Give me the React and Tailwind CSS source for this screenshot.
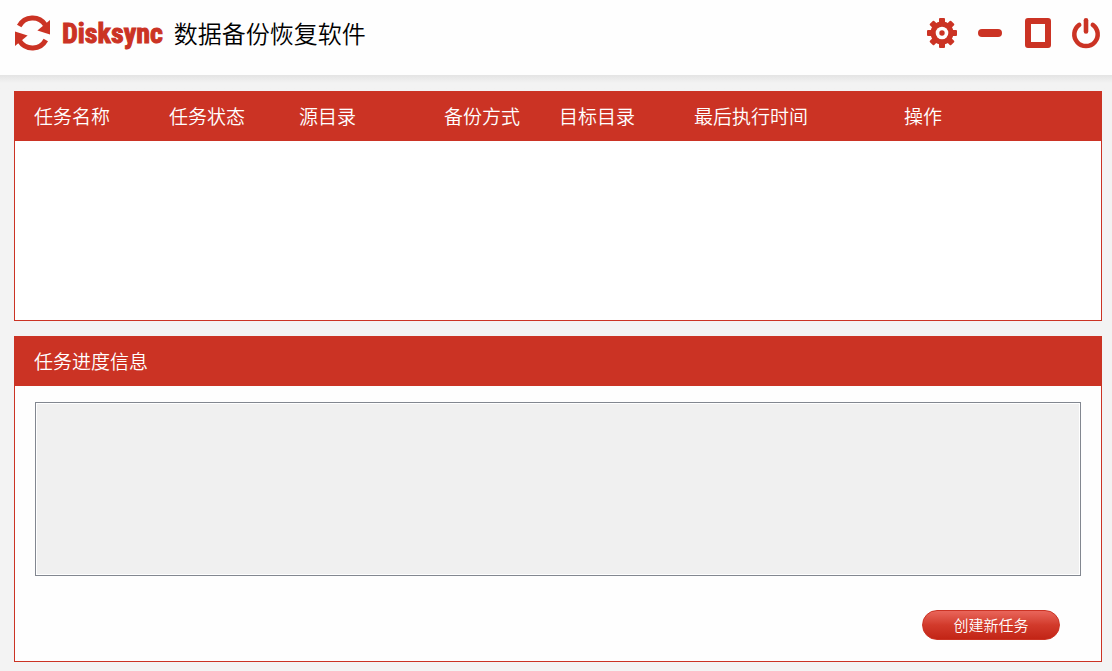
import React from 'react';

const columns = [
  { label: '任务名称', width: 'w-[154px]' },
  { label: '任务状态', width: 'w-[130px]' },
  { label: '源目录', width: 'w-[145px]' },
  { label: '备份方式', width: 'w-[115px]' },
  { label: '目标目录', width: 'w-[135px]' },
  { label: '最后执行时间', width: 'w-[210px]' },
  { label: '操作', width: '' },
];

const SyncIcon = () => (
  <svg className="h-9 w-9" viewBox="0 0 36 36" aria-hidden="true">
    <g fill="#cb3324">
      <path d="M4.2 11A15.2 15.2 0 0 1 30.3 9.8" fill="none" stroke="#cb3324" strokeWidth="5" />
      <path d="M35 5V19.6L22.4 15.4Z" />
    </g>
    <g fill="#cb3324" transform="rotate(180 17.5 18)">
      <path d="M4.2 11A15.2 15.2 0 0 1 30.3 9.8" fill="none" stroke="#cb3324" strokeWidth="5" />
      <path d="M35 5V19.6L22.4 15.4Z" />
    </g>
  </svg>
);

const GearIcon = () => (
  <svg className="h-8 w-8" viewBox="-16 -16 32 32" fill="#cb3324" aria-hidden="true">
    <g>
      {[0, 45, 90, 135].map((angle) => (
        <rect key={angle} x="-3" y="-15" width="6" height="30" rx="1" transform={`rotate(${angle})`} />
      ))}
    </g>
    <circle r="11.5" />
    <circle r="6.3" fill="#fefefe" />
    <circle r="2.7" />
  </svg>
);

const MinimizeIcon = () => (
  <svg className="h-8 w-8" viewBox="0 0 32 32" fill="#cb3324" aria-hidden="true">
    <rect x="4" y="12" width="24" height="8" rx="4" />
  </svg>
);

const MaximizeIcon = () => (
  <svg className="h-8 w-8" viewBox="0 0 32 32" fill="none" aria-hidden="true">
    <path fill="#cb3324" fillRule="evenodd" d="M6 1H26A3 3 0 0 1 29 4V28A3 3 0 0 1 26 31H6A3 3 0 0 1 3 28V4A3 3 0 0 1 6 1ZM9 7V25H23V7Z" />
  </svg>
);

const PowerIcon = () => (
  <svg className="h-8 w-8" viewBox="0 0 32 32" fill="none" stroke="#cb3324" strokeLinecap="round" aria-hidden="true">
    <path d="M9.2 7.8A11.7 11.7 0 1 0 22.8 7.8" strokeWidth="4.5" />
    <path d="M16 3.3V14.5" strokeWidth="4.6" />
  </svg>
);

const windowButtons = [
  { label: '设置', Icon: GearIcon },
  { label: '最小化', Icon: MinimizeIcon },
  { label: '最大化', Icon: MaximizeIcon },
  { label: '退出', Icon: PowerIcon },
];

function Header() {
  return (
    <header className="flex h-[75px] items-start justify-between bg-[#fefefe] pt-[15px] pr-[10px] pl-[15px]">
      <div className="flex h-9 items-center">
        <SyncIcon />
        <span className="ml-[11px] pt-0.5 font-['Liberation_Sans_Narrow','Roboto_Condensed',sans-serif] text-[28px] leading-9 font-bold text-[#cb3324] [-webkit-text-stroke:1px_#cb3324]">
          Disksync
        </span>
        <h1 className="ml-[11px] text-2xl leading-9 font-[350] text-black">数据备份恢复软件</h1>
      </div>
      <div className="flex h-9 items-center gap-4">
        {windowButtons.map(({ label, Icon }) => (
          <button key={label} type="button" aria-label={label} className="cursor-pointer">
            <Icon />
          </button>
        ))}
      </div>
    </header>
  );
}

function TaskTable() {
  return (
    <section className="min-h-[230px] flex-1 border border-[#cb3324] bg-white">
      <table className="w-full table-fixed border-collapse text-left">
        <thead className="bg-[#cb3324] text-white">
          <tr className="h-[49px]">
            {columns.map((column) => (
              <th key={column.label} scope="col" className={`p-0 pb-0.5 text-[19px] leading-7 font-[350] first:pl-[19px] ${column.width}`}>
                {column.label}
              </th>
            ))}
          </tr>
        </thead>
        <tbody />
      </table>
    </section>
  );
}

function TaskProgress() {
  return (
    <section className="flex flex-col border border-[#cb3324] bg-[#fefefe]">
      <div className="flex h-[49px] items-center bg-[#cb3324] px-[19px] pb-0.5 text-white">
        <label htmlFor="progress" className="text-[19px] leading-7 font-[350]">任务进度信息</label>
      </div>
      <div className="flex flex-col px-5 pt-4 pb-[21px]">
        <textarea
          id="progress"
          readOnly
          className="h-[174px] w-full resize-none border border-[#828790] bg-[#f0f0f0] p-2 text-sm outline-none inset-ring inset-ring-white"
        />
        <button
          type="button"
          className="mt-[34px] mr-[21px] h-[30px] w-[138px] cursor-pointer self-end rounded-full border border-[#cb3324] bg-linear-to-b from-[#e9655a] via-[#d23a2b] to-[#c22415] text-[15px] leading-5 font-[350] text-white"
        >
          创建新任务
        </button>
      </div>
    </section>
  );
}

function App() {
  return (
    <div className="flex min-h-screen flex-col bg-[#f3f3f3] font-['Noto_Sans_CJK_SC',sans-serif]">
      <Header />
      <div className="h-4 bg-linear-to-b from-[#e4e4e4] to-[#f3f3f3] to-50%" />
      <main className="flex flex-1 flex-col gap-[15px] pr-[10px] pb-[9px] pl-[14px]">
        <TaskTable />
        <TaskProgress />
      </main>
    </div>
  );
}

export default App;
